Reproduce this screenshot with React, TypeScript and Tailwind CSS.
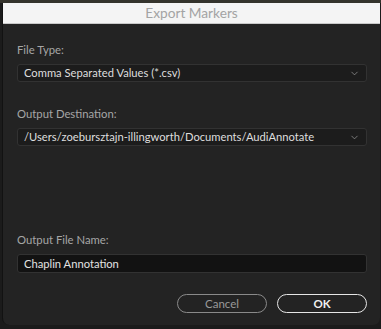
import { ChevronDown } from 'lucide-react';

const Select = ({ value }: { value: string }) => (
  <div className="flex h-[18px] items-center justify-between rounded-[3px] border border-[#323232] bg-[#1c1c1c] pl-[6px] pr-[6px]">
    <span className="text-[11.2px] leading-none text-[#dedede]">{value}</span>
    <ChevronDown className="h-[11px] w-[11px] text-[#a0a0a0]" strokeWidth={1.5} />
  </div>
);

const Label = ({ children }: { children: string }) => (
  <div className="h-[14px] text-[11.3px] leading-[14px] text-[#a6a6a6]">{children}</div>
);

export default function App() {
  return (
    <div className="h-[329px] w-[381px] overflow-hidden bg-[#1b1b1b] font-['Lato','Noto_Sans',sans-serif]">
      <div className="h-[3px] w-full bg-[#34332c]" />
      <div className="ml-[2px] flex h-[322px] w-[378px] flex-col overflow-hidden rounded-b-[7px] border-l border-[#121212] bg-[#232323]">
        <div className="flex h-[21px] items-center justify-center border-b border-[#c9c9c9] bg-[#f4f4f4]">
          <span className="text-[13.7px] leading-none text-[#a3a3a3]">Export Markers</span>
        </div>
        <div className="flex flex-col pl-[14px] pr-[13px] pt-[19px]">
          <Label>File Type:</Label>
          <div className="mt-[7px]">
            <Select value="Comma Separated Values (*.csv)" />
          </div>
          <div className="mt-[25px]">
            <Label>Output Destination:</Label>
          </div>
          <div className="mt-[7px]">
            <Select value="/Users/zoebursztajn-illingworth/Documents/AudiAnnotate" />
          </div>
          <div className="mt-[87px]">
            <Label>Output File Name:</Label>
          </div>
          <div className="mt-[7px] flex h-[19px] items-center rounded-[3px] border border-[#323232] bg-[#121212] pl-[6px]">
            <span className="text-[11.2px] leading-none text-[#e2e2e2]">Chaplin Annotation</span>
          </div>
          <div className="mt-[21px] flex justify-end gap-[10px]">
            <button className="flex h-[19px] w-[90px] items-center justify-center rounded-full border border-[#8a8a8a] text-[11.5px] leading-none text-[#9a9a9a]">
              Cancel
            </button>
            <button className="flex h-[19px] w-[90px] items-center justify-center rounded-full border-[1.5px] border-[#e6e6e6] text-[11.5px] font-bold leading-none text-[#f0f0f0]">
              OK
            </button>
          </div>
        </div>
      </div>
    </div>
  );
}
